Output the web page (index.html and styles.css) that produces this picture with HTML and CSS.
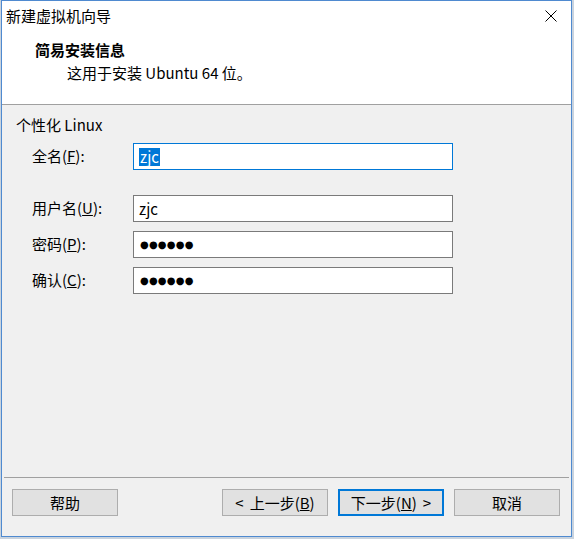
FILE: index.html
```html
<!DOCTYPE html>
<html lang="zh-CN">
<head>
<meta charset="utf-8">
<title>新建虚拟机向导</title>
<link rel="stylesheet" href="styles.css">
</head>
<body>
<div class="window">
  <div class="titlebar">
    <span class="title">新建虚拟机向导</span>
    <span class="close" aria-label="关闭">
      <svg width="12" height="12" viewBox="0 0 12 12"><path d="M0.5 0.5 L11.5 11.5 M11.5 0.5 L0.5 11.5" stroke="#000" stroke-width="1" fill="none"/></svg>
    </span>
  </div>
  <div class="header">
    <div class="header-title">简易安装信息</div>
    <div class="header-sub">这用于安装 Ubuntu 64 位。</div>
  </div>
  <div class="content">
    <div class="group-title">个性化 Linux</div>
    <div class="form">
      <div class="row row-first">
        <label class="label">全名(<u>F</u>):</label>
        <div class="input focused"><span class="sel">zjc</span></div>
      </div>
      <div class="row row-gap">
        <label class="label">用户名(<u>U</u>):</label>
        <div class="input">zjc</div>
      </div>
      <div class="row">
        <label class="label">密码(<u>P</u>):</label>
        <div class="input"><span class="dots">●●●●●●</span></div>
      </div>
      <div class="row">
        <label class="label">确认(<u>C</u>):</label>
        <div class="input"><span class="dots">●●●●●●</span></div>
      </div>
    </div>
  </div>
  <div class="footer">
    <button class="btn">帮助</button>
    <div class="spacer"></div>
    <button class="btn">&lt;<span class="gap"></span>上一步(<u>B</u>)</button>
    <button class="btn default">下一步(<u>N</u>)<span class="gap"></span>&gt;</button>
    <button class="btn">取消</button>
  </div>
</div>
</body>
</html>
```
FILE: styles.css
```css
html, body {
  margin: 0;
  padding: 0;
}
body {
  width: 574px;
  height: 539px;
  background: #c9d3de;
  font-family: "Noto Sans CJK SC", "Microsoft YaHei", sans-serif;
  font-size: 15px;
  color: #000;
  overflow: hidden;
}
.window {
  box-sizing: border-box;
  margin-left: 1px;
  width: 571px;
  height: 537px;
  border: 1px solid #4f8ad0;
  background: #f0f0f0;
  display: flex;
  flex-direction: column;
}
.titlebar {
  height: 30px;
  background: #fff;
  display: flex;
  align-items: center;
  justify-content: space-between;
  padding: 0 14px 0 4px;
}
.title {
  line-height: 20px;
}
.close {
  display: flex;
  width: 12px;
  height: 12px;
  margin-top: -1px;
}
.header {
  height: 73px;
  background: #fff;
  border-bottom: 1px solid #a0a0a0;
}
.header-title {
  font-weight: bold;
  line-height: 20px;
  padding: 9px 0 0 33px;
}
.header-sub {
  line-height: 20px;
  padding: 3px 0 0 65px;
}
.content {
  flex: 1;
  padding: 10px 0 0 14px;
}
.group-title {
  line-height: 20px;
}
.form {
  margin-left: 16px;
  margin-top: 8px;
  display: flex;
  flex-direction: column;
  gap: 9px;
}
.row {
  display: flex;
  align-items: center;
  height: 27px;
}
.row-gap {
  margin-top: 16px;
}
.label {
  width: 101px;
  line-height: 20px;
  margin-top: -1px;
}
.input {
  box-sizing: border-box;
  width: 320px;
  height: 27px;
  background: #fff;
  border: 1px solid #7a7a7a;
  display: flex;
  align-items: center;
  padding-left: 5px;
  line-height: 20px;
}
.input.focused {
  border-color: #0078d7;
}
.sel {
  background: #0078d7;
  color: #fff;
  line-height: 18px;
  padding: 0 1px;
}
.dots {
  font-family: "DejaVu Sans", sans-serif;
  font-size: 10px;
  letter-spacing: 0.2px;
  line-height: 18px;
  padding-left: 1px;
}
.footer {
  height: 47px;
  border-top: 1px solid #a0a0a0;
  margin: 0 2px;
  display: flex;
  align-items: flex-start;
  gap: 10px;
  padding: 11px 9px 0 8px;
}
.spacer {
  flex: 1;
}
.btn {
  box-sizing: border-box;
  width: 106px;
  height: 27px;
  background: #e1e1e1;
  border: 1px solid #adadad;
  font-family: inherit;
  font-size: 15px;
  color: #000;
  padding: 0;
  line-height: 20px;
}
.btn .gap {
  display: inline-block;
  width: 6px;
}
.btn.default {
  border: 2px solid #0078d7;
}
```
